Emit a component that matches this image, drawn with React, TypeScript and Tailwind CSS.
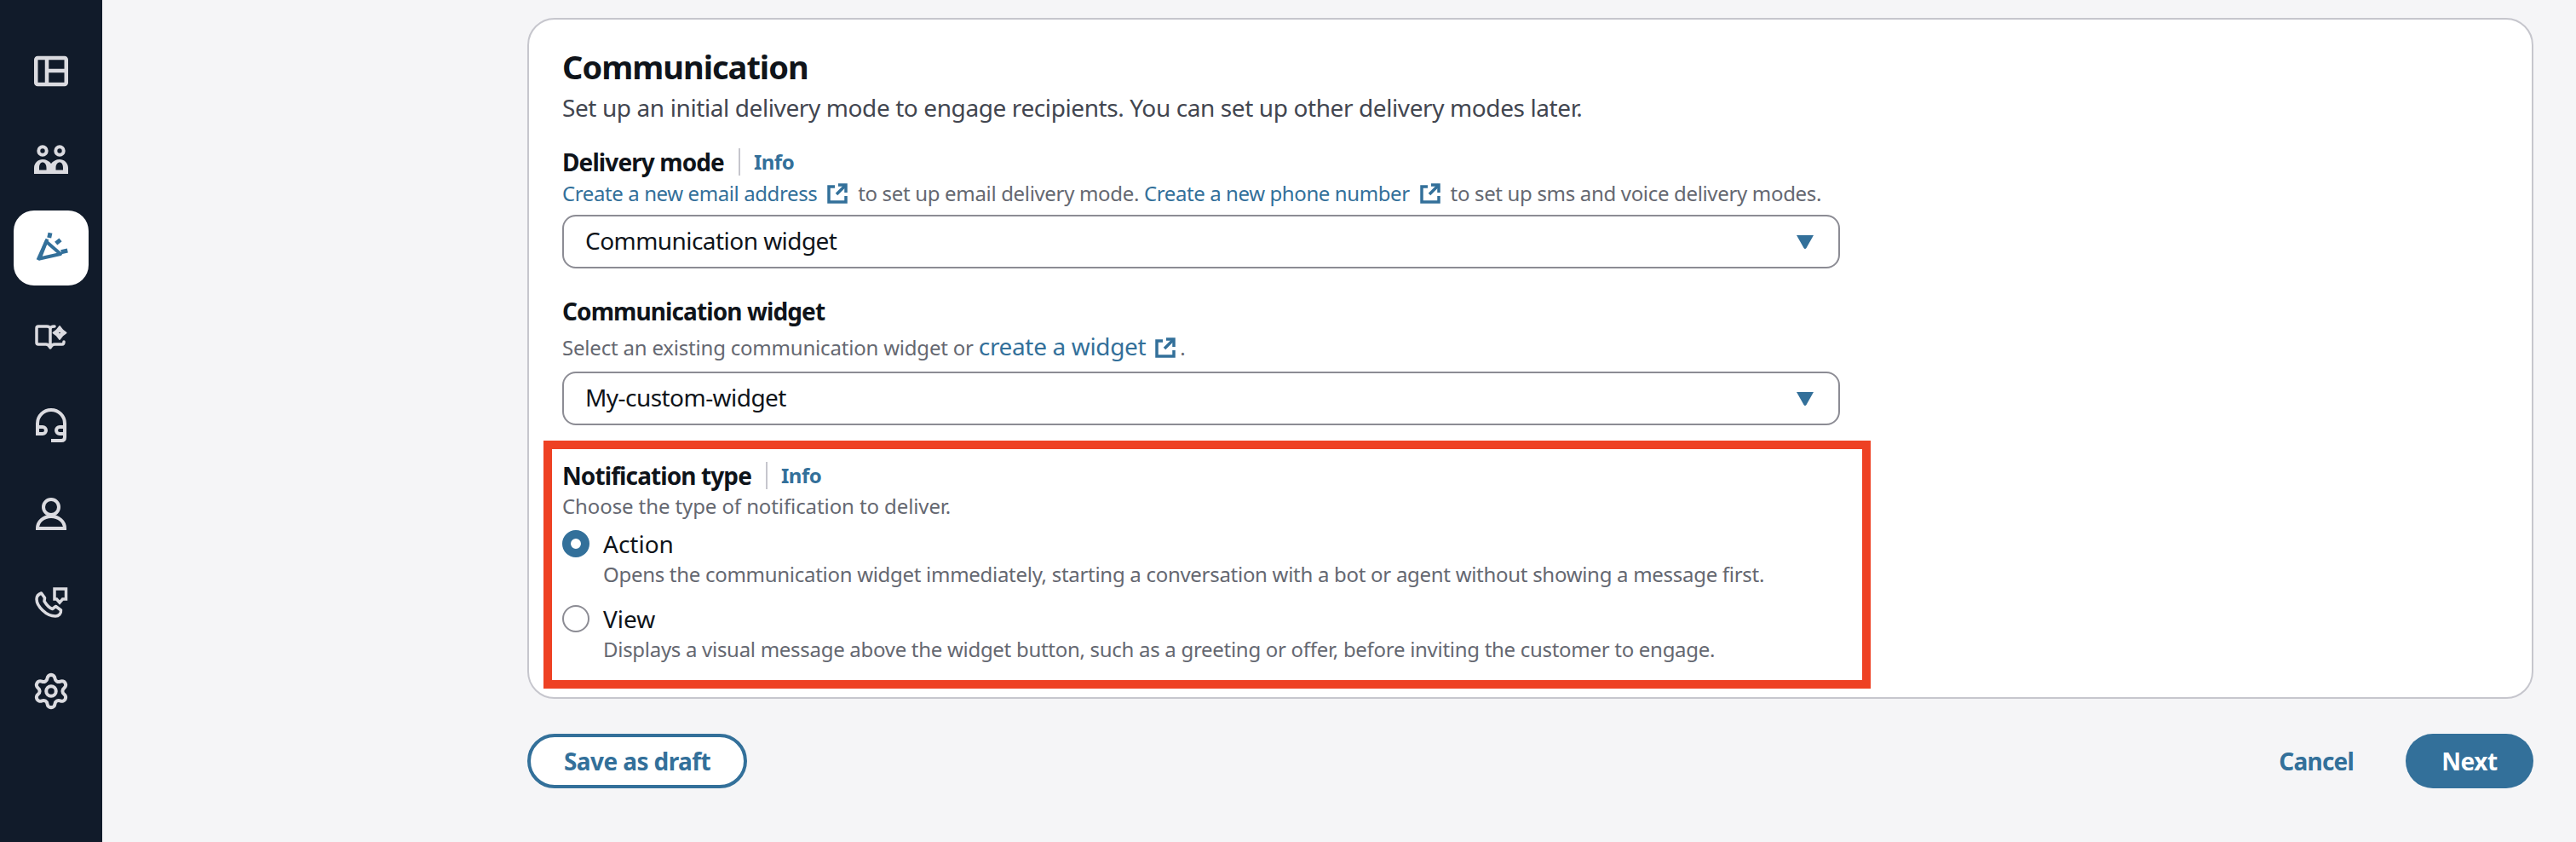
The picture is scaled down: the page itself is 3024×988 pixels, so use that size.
import React from 'react';
import { Settings } from 'lucide-react';

const font = { fontFamily: '"Noto Sans", sans-serif' };

const ExternalIcon = ({ className }: { className: string }) => (
  <svg viewBox="0 0 24 24" className={`inline-block h-6 w-6 align-[-3px] ${className}`} fill="none" stroke="#33709a" strokeWidth="3.5">
    <path d="M9 4H2V22H22V15" />
    <path d="M13 2H22V11" />
    <path d="M22 2L11 13" />
  </svg>
);

const Caret = () => (
  <svg viewBox="0 0 20 16" className="h-4 w-5" fill="#33709a">
    <path d="M0 0H20L11.5 15a1.7 1.7 0 0 1-3 0Z" />
  </svg>
);

const navIcon = 'h-10 w-10';

const LayoutIcon = () => (
  <svg viewBox="0 0 40 40" className={navIcon} fill="none" stroke="currentColor" strokeWidth="4.5">
    <rect x="2.250" y="5" width="35.500" height="31" rx="2" />
    <path d="M15 5V36M15 20H38" />
  </svg>
);

const PeopleIcon = () => (
  <svg viewBox="0 0 40 40" className={navIcon} fill="none" stroke="currentColor" strokeWidth="4">
    <circle cx="10" cy="10" r="4.700" />
    <circle cx="30" cy="10" r="4.700" />
    <path
      fill="currentColor"
      stroke="none"
      fillRule="evenodd"
      d="M0 37V30C0 24 5 20 10 20C14 20 18 22 20 25C22 22 26 20 30 20C35 20 40 24 40 30V37ZM6 32.500H14.500V30C14.500 26 12.500 23.500 10 23.500C7.500 23.500 6 26 6 30ZM25.500 32.500H34V30C34 26 32.500 23.500 30 23.500C27.500 23.500 25.500 26 25.500 30Z"
    />
  </svg>
);

const MegaphoneIcon = () => (
  <svg viewBox="0 0 40 40" className={navIcon} fill="none" stroke="currentColor" strokeWidth="4">
    <path d="M14.300 12.500L31 27L6.500 32.500Z" strokeLinejoin="round" />
    <path d="M15.500 9.500L4.500 34" />
    <path d="M19 2.300L17.700 8M31 10.300L25.700 14.700M39.300 23L31.700 24.700" strokeWidth="5" />
  </svg>
);

const BookIcon = () => (
  <svg viewBox="0 0 40 40" className={navIcon} fill="none" stroke="currentColor" strokeWidth="3.5" strokeLinecap="round" strokeLinejoin="round">
    <path d="M19 33V11C19 9 17 8 15 8H5Q3 8 3 10V27Q3 29 5 29H14C16 29 18 31 19 33C20 31 22 29 24 29H33Q35 29 35 26M19 11C19 9 21 8 24 8" />
    <path d="M30 8L33.500 12.500L37.500 15.500L33.500 18.500L30 23L26.500 18.500L22.500 15.500L26.500 12.500Z" fill="currentColor" strokeWidth="2" />
    <circle cx="30" cy="15.500" r="0.800" fill="#111b2a" stroke="none" />
  </svg>
);

const HeadsetIcon = () => (
  <svg viewBox="0 0 40 40" className={navIcon} fill="none" stroke="currentColor" strokeWidth="4">
    <path d="M4 30V18A16 16 0 0 1 36 18V34Q36 38 32 38H20" />
    <path d="M4 22H10a3.500 3.500 0 0 1 0 8H4Z" />
    <path d="M36 22H30a3.500 3.500 0 0 0 0 8H36Z" />
  </svg>
);

const PersonIcon = () => (
  <svg viewBox="0 0 40 40" className={navIcon} fill="none" stroke="currentColor" strokeWidth="4">
    <circle cx="20" cy="12" r="9" />
    <path d="M4 37C4 29 11 23 20 23S36 29 36 37Z" />
  </svg>
);

const PhoneChatIcon = () => (
  <svg viewBox="0 0 40 40" className={navIcon} fill="none" stroke="currentColor" strokeWidth="3.500">
    <path d="M24 4H37.500V16H33.500L30 20L26.500 16H24Z" />
    <path d="M12.500 14.500L8.500 9Q3 11 3 16C3 24 14 36 25 36C29 36 32 33 31.500 29L25.500 24.500L21.500 27.500C18 26.500 14.500 22.500 12 18.500Z" strokeLinejoin="round" />
  </svg>
);

const NavItem = ({ active, children }: { active?: boolean; children: React.ReactNode }) => (
  <div className={active ? 'flex h-[88px] w-[88px] items-center justify-center rounded-[24px] bg-white text-[#33709a]' : 'flex h-[88px] w-[88px] items-center justify-center rounded-[24px] text-[#dbdbe0]'}>
    {children}
  </div>
);

const Select = ({ value, className }: { value: string; className: string }) => (
  <div className={`flex h-[63px] w-[1500px] items-center justify-between rounded-[16px] border-2 border-[#8c8c94] bg-white pl-[25px] pr-[29px] text-[28px] tracking-[-0.55px] text-[#0f141a] ${className}`}>
    <span className="pb-[3px]">{value}</span>
    <Caret />
  </div>
);

const Label = ({ children, info }: { children: React.ReactNode; info?: boolean }) => (
  <div className="flex h-10 items-center text-[28px] leading-10 font-bold tracking-[-0.9px] text-[#0f141a]">
    <span>{children}</span>
    {info && (
      <>
        <span className="ml-[17px] mr-[16px] h-8 w-0.5 bg-[#c6c6cd]" />
        <span className="text-[24px] font-bold tracking-[-0.5px] text-[#33709a]">Info</span>
      </>
    )}
  </div>
);

const Radio = ({ checked, label, desc, className }: { checked?: boolean; label: string; desc: string; className?: string }) => (
  <div className={className}>
    <div className="flex h-10 items-center gap-4 text-[28px] leading-10 text-[#0f141a]">
      {checked ? (
        <span className="h-8 w-8 rounded-full border-[10px] border-[#33709a] bg-white" />
      ) : (
        <span className="h-8 w-8 rounded-full border-2 border-[#8c8c94] bg-white" />
      )}
      <span>{label}</span>
    </div>
    <p className="pl-12 text-[24px] leading-8 tracking-[-0.29px] text-[#656871]">{desc}</p>
  </div>
);

export default function App() {
  return (
    <div className="flex min-h-screen bg-[#f5f5f7]" style={font}>
      <nav className="flex w-[120px] shrink-0 flex-col items-center gap-4 bg-[#111b2a] pt-[39px]">
        <NavItem><LayoutIcon /></NavItem>
        <NavItem><PeopleIcon /></NavItem>
        <NavItem active><MegaphoneIcon /></NavItem>
        <NavItem><BookIcon /></NavItem>
        <NavItem><HeadsetIcon /></NavItem>
        <NavItem><PersonIcon /></NavItem>
        <NavItem><PhoneChatIcon /></NavItem>
        <NavItem><Settings size={46} strokeWidth={2.1} /></NavItem>
      </nav>

      <main className="flex-1 pl-[499px] pr-[50px] pt-[21px]">
        <section className="h-[799px] rounded-[32px] border-2 border-[#c6c6cd] bg-white px-[39px] pt-[30px]">
          <h2 className="text-[38px] leading-[51px] font-bold tracking-[-1px] text-[#0f141a]">Communication</h2>
          <p className="mt-0.5 text-[28px] leading-10 tracking-[-0.4px] text-[#424650]">
            Set up an initial delivery mode to engage recipients. You can set up other delivery modes later.
          </p>

          <div className="mt-6">
            <Label info>Delivery mode</Label>
            <p className="mt-px h-8 text-[24px] leading-8 tracking-[-0.33px] text-[#656871]">
              <span className="tracking-[-0.4px] text-[#33709a]">Create a new email address</span> <ExternalIcon className="mx-1.5" /> to set up email delivery mode.{' '}
              <span className="tracking-[-0.4px] text-[#33709a]">Create a new phone number</span> <ExternalIcon className="mx-1.5" /> to set up sms and voice delivery modes.
            </p>
            <Select value="Communication widget" className="mt-[9px]" />
          </div>

          <div className="mt-[30px]">
            <Label>Communication widget</Label>
            <p className="mt-[5px] h-[34px] text-[24px] leading-8 tracking-[-0.2px] text-[#656871]">
              Select an existing communication widget or <span className="text-[28px] tracking-[-0.35px] text-[#33709a]">create a widget</span>{' '}
              <ExternalIcon className="mx-[5px]" />.
            </p>
            <Select value="My-custom-widget" className="mt-3" />
          </div>

          <div className="relative mt-[39px]">
            <Label info>Notification type</Label>
            <p className="text-[24px] leading-8 tracking-[-0.1px] text-[#656871]">Choose the type of notification to deliver.</p>
            <Radio
              checked
              className="mt-2"
              label="Action"
              desc="Opens the communication widget immediately, starting a conversation with a bot or agent without showing a message first."
            />
            <Radio
              className="mt-4"
              label="View"
              desc="Displays a visual message above the widget button, such as a greeting or offer, before inviting the customer to engage."
            />
            <div className="absolute -left-[22px] -top-[21px] h-[291px] w-[1558px] border-[10px] border-[#ee4123]" />
          </div>
        </section>

        <div className="mt-[41px] flex items-center justify-between">
          <button className="h-16 w-[258px] rounded-full border-4 border-[#33709a] bg-white text-[28px] font-bold tracking-[-0.6px] text-[#33709a]">
            Save as draft
          </button>
          <div className="flex items-center gap-[61px]">
            <button className="text-[28px] font-bold tracking-[-0.8px] text-[#33709a]">Cancel</button>
            <button className="h-16 w-[150px] rounded-full bg-[#33709a] text-[28px] font-bold tracking-[-0.5px] text-white">Next</button>
          </div>
        </div>
      </main>
    </div>
  );
}
